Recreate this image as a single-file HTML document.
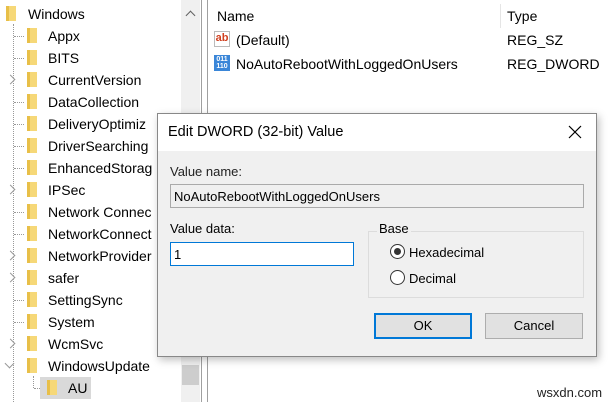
<!DOCTYPE html>
<html><head><meta charset="utf-8"><style>
*{margin:0;padding:0;box-sizing:border-box}
body{width:610px;height:402px;overflow:hidden;background:#fff;font-family:"Liberation Sans",sans-serif;font-size:14px;color:#000;position:relative}
.a{position:absolute;white-space:nowrap}
.t{position:absolute;line-height:16px}
.f{position:absolute;width:10px;height:15px;background:#f6d878;border-left:3px solid #e8bf48}
.dv{position:absolute;border-left:1px dotted #999}
.dh{position:absolute;border-top:1px dotted #999;width:10px}
.ar{position:absolute;width:7px;height:7px;border-right:1.5px solid #999;border-top:1.5px solid #999;transform:rotate(45deg)}
</style></head><body>
<div class="dv" style="left:13px;top:24px;height:378px"></div>
<div class="dv" style="left:33px;top:376px;height:12px"></div>
<div class="dh" style="left:34px;top:388px"></div>
<div class="f" style="left:6px;top:6px"></div><div class="t" style="left:28px;top:6px">Windows</div>
<div class="a" style="left:40px;top:377px;width:51px;height:22px;background:#d9d9d9"></div>
<div class="f" style="left:47px;top:380px"></div><div class="t" style="left:68px;top:380px">AU</div>
<div class="ar" style="left:6px;top:360px;transform:rotate(135deg)"></div>
<div id="tree"></div>
<script>
var rows=[["Appx",0],["BITS",0],["CurrentVersion",1],["DataCollection",0],["DeliveryOptimiz",0],["DriverSearching",0],["EnhancedStorag",0],["IPSec",1],["Network Connec",0],["NetworkConnect",0],["NetworkProvider",1],["safer",1],["SettingSync",0],["System",0],["WcmSvc",1],["WindowsUpdate",2]];
var h="";rows.forEach(function(r,i){var y=36+i*22;
h+='<div class="f" style="left:27px;top:'+(y-8)+'px"></div><div class="t" style="left:48px;top:'+(y-8)+'px">'+r[0]+'</div>';
if(r[1]==0)h+='<div class="dh" style="left:14px;top:'+y+'px"></div>';
else if(r[1]==1)h+='<div class="ar" style="left:7px;top:'+(y-4)+'px;background:#fff"></div>';});
document.getElementById("tree").innerHTML=h;
</script>
<div class="a" style="left:181px;top:0;width:19px;height:402px;background:#f0f0f0"></div>
<div class="a" style="left:182px;top:365px;width:17px;height:20px;background:#cdcdcd"></div>
<div class="ar" style="left:187px;top:12px;transform:rotate(-45deg);border-color:#606060"></div>
<div class="a" style="left:201px;top:0;width:1px;height:402px;background:#a0a0a0"></div>
<div class="a" style="left:207px;top:0;width:1px;height:402px;background:#a0a0a0"></div>
<div class="a" style="left:500px;top:4px;width:1px;height:24px;background:#e5e5e5"></div>
<div class="t" style="left:217px;top:8px">Name</div>
<div class="t" style="left:507px;top:8px">Type</div>
<div class="a" style="left:214px;top:31px;width:16px;height:16px;border:1px solid #bbb;background:#fff;color:#d04020;font-weight:bold;font-size:11px;line-height:12px;text-align:center">ab</div>
<div class="t" style="left:236px;top:32px">(Default)</div><div class="t" style="left:507px;top:32px">REG_SZ</div>
<div class="a" style="left:214px;top:55px;width:16px;height:16px;background:#3a86d8;color:#fff;font-weight:bold;font-size:7px;line-height:7px;text-align:center;padding-top:1px">011<br>110</div>
<div class="t" style="left:236px;top:56px">NoAutoRebootWithLoggedOnUsers</div><div class="t" style="left:507px;top:56px">REG_DWORD</div>
<div class="a" style="left:157px;top:113px;width:440px;height:244px;background:#f0f0f0;border:1px solid #888;box-shadow:2px 3px 8px rgba(0,0,0,.25)">
<div class="a" style="left:0;top:0;width:438px;height:37px;background:#fff"></div>
<div class="t" style="left:10px;top:10px;font-size:14.5px">Edit DWORD (32-bit) Value</div>
<svg class="a" style="left:410px;top:11px" width="14" height="14"><path d="M1 1L13 13M13 1L1 13" stroke="#000" stroke-width="1.2"/></svg>
<div class="t" style="left:12px;top:50px;font-size:13px;color:#222">Value name:</div>
<div class="a" style="left:12px;top:70px;width:414px;height:24px;border:1px solid #aaa;background:#f0f0f0"></div>
<div class="t" style="left:16px;top:75px;font-size:13px">NoAutoRebootWithLoggedOnUsers</div>
<div class="t" style="left:12px;top:107px;font-size:13px">Value data:</div>
<div class="a" style="left:12px;top:128px;width:184px;height:24px;border:1px solid #0078d7;background:#fff"></div>
<div class="t" style="left:16px;top:133px;font-size:13px">1</div>
<div class="a" style="left:210px;top:117px;width:216px;height:67px;border:1px solid #dcdcdc"></div>
<div class="t" style="left:219px;top:107px;font-size:13px;background:#f0f0f0;padding:0 2px">Base</div>
<div class="a" style="left:232px;top:130px;width:15px;height:15px;border:1px solid #333;border-radius:50%;background:#fff"></div>
<div class="a" style="left:236px;top:134px;width:7px;height:7px;border-radius:50%;background:#333"></div>
<div class="t" style="left:251px;top:131px;font-size:13px">Hexadecimal</div>
<div class="a" style="left:232px;top:156px;width:15px;height:15px;border:1px solid #333;border-radius:50%;background:#fff"></div>
<div class="t" style="left:251px;top:157px;font-size:13px">Decimal</div>
<div class="a" style="left:216px;top:199px;width:98px;height:26px;border:2px solid #0078d7;background:#e1e1e1;text-align:center;line-height:22px;font-size:13px">OK</div>
<div class="a" style="left:327px;top:199px;width:98px;height:26px;border:1px solid #adadad;background:#e1e1e1;text-align:center;line-height:24px;font-size:13px">Cancel</div>
</div>
<div class="t" style="left:537px;top:385px;font-size:13px;color:#222">wsxdn.com</div>
</body></html>
